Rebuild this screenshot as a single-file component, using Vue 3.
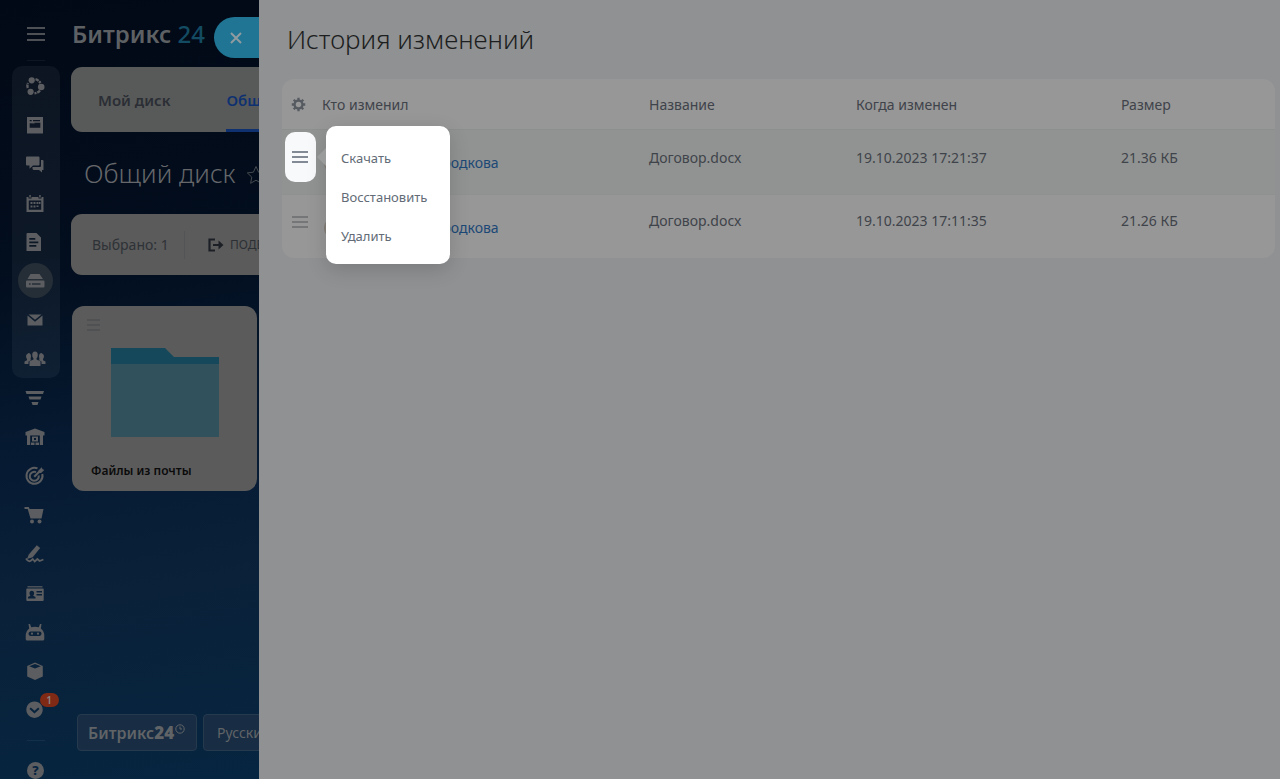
<script setup>
const grouped = ['network', 'feed', 'chat', 'calendar', 'doc', 'disk', 'mail', 'people']
const single = ['funnel', 'store', 'target', 'cart', 'sign', 'card', 'robot', 'box', 'more']
const labels = {
  network: 'Совместная работа', feed: 'Лента', chat: 'Чат', calendar: 'Календарь', doc: 'Документы',
  disk: 'Диск', mail: 'Почта', people: 'Группы', funnel: 'CRM', store: 'Склад', target: 'Маркетинг',
  cart: 'Магазин', sign: 'Подпись', card: 'Компания', robot: 'Автоматизация', box: 'Маркет', more: 'Ещё'
}
const icons = {
  network: '<g fill="none" stroke="currentColor" stroke-width="2.4"><path d="M10.500 3.200Q13.500 4 15.500 7M15 14.500Q13 17 9.500 17.200M2.800 12Q1.800 9.500 3 7"  stroke-dasharray="3.500 .8"/></g><circle cx="6.7" cy="4.3" r="3.100"/><circle cx="16.200" cy="11" r="3.300"/><circle cx="5.600" cy="15.800" r="3.100"/>',
  feed: '<path fill-rule="evenodd" d="M2 2h16v16.500H2zM4.700 5v1.300h2V5zM8 5v1.300h7V5zM4.700 8.200v4.600h10.600V7.700H9.500v.8z"/>',
  chat: '<path d="M2 2.500h11.500q1 0 1 1v7q0 1-1 1H8L4.500 14.800v-3.300H2q-1 0-1-1v-7q0-1 1-1z"/><path d="M16 6h1.500q1 0 1 1v9h-1.500v2.500L14 16H9q-1.500 0-1.500-1.500V13H15q1 0 1-1z"/>',
  calendar: '<path fill-rule="evenodd" d="M1.500 4h2v1.500h3V4h7v1.500h3V4h2v15h-17zM3.800 7.500v9.200h12.400V7.500z"/><path d="M4.300 2h1.500v2.500H4.300zM14.200 2h1.500v2.500h-1.500zM8.500 9h2v2h-2zM11.500 9h2v2h-2zM5.500 12.500h2v2h-2zM8.500 12.500h2v2h-2zM5.500 9h2v2h-2zM14 9h1.500v2H14zM11.500 12.500h2v1.500h-2z"/>',
  doc: '<path fill-rule="evenodd" d="M2.500 1h9L16 5.500V19H1.500V2q0-1 1-1zM4.300 6v1.700h6V6zM4.300 9.500v1.700h9V9.500zM4.300 13v1.700h7V13z"/>',
  disk: '<path fill-rule="evenodd" d="M5.500 3h9l3.500 5H2.500zM2 9.500h16.500q1 0 1 1v5q0 1-1 1H2q-1 0-1-1v-5q0-1 1-1zM4 12.200v1.600h1.600v-1.600zM7 12.200v1.600h8.500v-1.600z"/>',
  mail: '<path d="M3.500 4.500h13L10 9.800z"/><path d="M2.500 5.500 10 11.700l7.500-6.200v10h-15z"/>',
  people: '<path d="M7.200 6Q7.200 2.500 10 2.500T12.800 6Q12.800 8 11.500 9.500v1l4 1.800V17h-11v-4.700l4-1.800v-1Q7.200 8 7.200 6z"/><path d="M3.500 4Q6 4 6 7.500L5.500 10.500l1 .5-3 1.500V15H-.5v-2.500l2.500-1.300v-1Q1 8.500 1 7T3.500 4zM16.500 4Q14 4 14 7.500l.5 3-1 .5 3 1.500V15h4v-2.500L18 11.200v-1Q19 8.500 19 7T16.500 4z"/>',
  funnel: '<path d="M.500 3h18.500l-1 3H1.500zM3.500 8.500h13l-1 3h-11zM6.500 14h7l-1 3h-5z"/>',
  store: '<path fill-rule="evenodd" d="M10 1.500 19.500 5v3.500H18V18h-3.200V8.500H5.200V18H2V8.500H.500V5z"/><path fill-rule="evenodd" d="M7 9.500h6v5H7zM9 11v2h2v-2zM6 15.500h3.500V18H6zM10.500 15.500H14V18h-3.500z"/>',
  target: '<g fill="none" stroke="currentColor" stroke-width="2"><path d="M12.500 2.400A8 8 0 1 0 17.300 8"/><path d="M11 6.200A4.500 4.500 0 1 0 13.700 9.500"/><path d="m9.200 10.800 5.500-5.500" stroke-width="2.2"/></g><path d="m13.500 4.500 3.200-3.200.7 1.800 1.900.8-3.200 3.100h-2.600z"/>',
  cart: '<path d="M-.500 2h4.300l.8 2H18.500l-2 9.500H5.500L2.700 4H-.500z"/><circle cx="7" cy="16.500" r="2"/><circle cx="14.500" cy="16.500" r="2"/>',
  sign: '<path d="m11.800 1.300 3.400 2.700-7.500 9.300-5.700 1.700 1.800-4.500z"/><path d="M1 14.500q2 3.500 4.500 2.500l2.200-2 2 2.500 2.700-2.500 2.200 2 3.800-1.500" fill="none" stroke="currentColor" stroke-width="1.800"/>',
  card: '<path fill-rule="evenodd" d="M2 5.500h16q.700 0 .700.700V17q0 1-1 1H2.300q-1 0-1-1V6.200q0-.700.700-.700zM11.500 8v1.500H17V8zM11.500 11v1.500H17V11zM3 15.500h7.500v-1.500l-2.300-1.200q1.200-1.300.9-3.300Q8.700 7.700 6.800 7.700T4.500 9.500q-.300 2 .900 3.300L3 14z"/><path d="M2.500 3.200h15v1.200h-15z"/>',
  robot: '<path fill-rule="evenodd" d="M3.500 2h1.500l1.200 3.300Q10 4 13.800 5.300L15 2h1.500l-.7 4.500q3.500 2.500 3.500 7.500v3q0 1.500-1.500 1.500H2.200Q.7 18.500.7 17v-3q0-5 3.500-7.500zM5.500 9.500q-2 .2-2 2.200t2 2.300h9q2-.2 2-2.300t-2-2.200z"/><circle cx="7" cy="11.700" r="1.100"/><circle cx="13" cy="11.700" r="1.100"/>',
  box: '<path fill-rule="evenodd" d="M10 1.500 17.800 5v10.500L10 19l-7.800-3.500V5zM10 3 4.200 5.300 10 7.500l5.800-2.200z"/>',
  more: '<path fill-rule="evenodd" d="M9.500 1.500a8.200 8.200 0 1 0 .01 0zM5.800 7.500l3.700 3.300 3.700-3.300 1.300 1.500-5 4.500-5-4.500z"/>'
}
const rows = [
  { who: 'Мария Бородкова', name: 'Договор.docx', when: '19.10.2023 17:21:37', size: '21.36 КБ', active: true },
  { who: 'Мария Бородкова', name: 'Договор.docx', when: '19.10.2023 17:11:35', size: '21.26 КБ', active: false }
]
const actions = ['Скачать', 'Восстановить', 'Удалить']
</script>

<template>
  <div class="page">
    <div class="portal">
      <nav class="rail">
        <button class="burger" aria-label="Меню"><i></i><i></i><i></i></button>
        <hr class="line" />
        <div class="group">
          <a v-for="k in grouped" :key="k" href="#" class="nav" :class="{ current: k === 'disk' }" :aria-label="labels[k]">
            <svg viewBox="0 0 20 20" v-html="icons[k]"></svg>
          </a>
        </div>
        <a v-for="k in single" :key="k" href="#" class="nav" :aria-label="labels[k]">
          <svg viewBox="0 0 20 20" v-html="icons[k]"></svg>
          <span v-if="k === 'more'" class="badge">1</span>
        </a>
        <hr class="line low" />
        <a href="#" class="help" aria-label="Помощь">?</a>
      </nav>
      <main class="work">
        <header class="logo"><b>Битрикс</b> <span>24</span></header>
        <nav class="tabs">
          <a href="#">Мой диск</a>
          <a href="#" class="on">Общий диск</a>
        </nav>
        <h1 class="title">
          <span>Общий диск</span>
          <svg viewBox="0 0 20 20"><path d="m10 1.500 2.600 5.700 6.100.7-4.500 4.200 1.200 6.200-5.400-3.100-5.400 3.100 1.200-6.200L1.300 7.900l6.100-.7z" /></svg>
        </h1>
        <div class="toolbar">
          <span class="picked">Выбрано: 1</span>
          <button class="share">
            <svg viewBox="0 0 16 14"><path d="M7 1.500H1.500v11H7M5 7h7" fill="none" stroke="currentColor" stroke-width="2.200" /><path d="M10.500 2.500 15.500 7l-5 4.500z" /></svg>
            <span>ПОДЕЛИТЬСЯ</span>
          </button>
        </div>
        <article class="tile">
          <button class="grip" aria-label="Действия"><i></i><i></i><i></i></button>
          <svg class="folder" viewBox="0 0 108 89"><path class="back" d="M0 0h54l9 9h45v20H0z" /><path class="front" d="M0 16h108v73H0z" /></svg>
          <span class="caption">Файлы из почты</span>
        </article>
        <footer class="foot">
          <a href="#" class="brand">Битрикс<b>24</b>
            <svg viewBox="0 0 10 10"><circle cx="5" cy="5" r="4.200" /><path d="M5 2.500V5h2" /></svg>
          </a>
          <a href="#" class="lang">Русский</a>
        </footer>
      </main>
      <button class="close" aria-label="Закрыть">
        <svg viewBox="0 0 12 12"><path d="m1 1 10 10M11 1 1 11" /></svg>
      </button>
    </div>

    <section class="drawer">
      <h2>История изменений</h2>
      <table>
        <colgroup><col class="c1" /><col class="c2" /><col class="c3" /><col class="c4" /><col class="c5" /></colgroup>
        <thead>
          <tr>
            <th>
              <button class="gear" aria-label="Настройки">
                <svg viewBox="0 0 16 16"><circle cx="8" cy="8" r="4.200" /><path d="M8 .8v3M8 12.200v3M.8 8h3M12.200 8h3M2.900 2.900l2.200 2.200M10.900 10.900l2.200 2.200M2.900 13.100l2.200-2.200M10.900 5.100l2.200-2.200" /></svg>
              </button>
            </th>
            <th>Кто изменил</th><th>Название</th><th>Когда изменен</th><th>Размер</th>
          </tr>
        </thead>
        <tbody>
          <tr v-for="r in rows" :key="r.when" :class="{ active: r.active }">
            <td class="act">
              <button class="dots" aria-label="Действия"><i></i><i></i><i></i></button>
              <div v-if="r.active" class="menu" role="menu">
                <button v-for="a in actions" :key="a" role="menuitem">{{ a }}</button>
              </div>
            </td>
            <td class="who"><span class="person"><span class="avatar"></span><a href="#">{{ r.who }}</a></span></td>
            <td>{{ r.name }}</td>
            <td>{{ r.when }}</td>
            <td>{{ r.size }}</td>
          </tr>
        </tbody>
      </table>
    </section>
  </div>
</template>

<style>
body { background: #8f9193; }
</style>

<style scoped>
* { box-sizing: border-box; }
.page { display: flex; height: 100vh; overflow: hidden; font-family: "Noto Sans", "Open Sans", sans-serif; font-size: 14px; }
button { border: 0; background: none; padding: 0; font: inherit; color: inherit; }
a { text-decoration: none; color: inherit; }
svg { display: block; fill: currentColor; overflow: visible; }

.portal { position: relative; display: flex; flex: 0 0 259px; overflow: hidden; background: linear-gradient(172deg, #020916 0%, #020d1d 32%, #061b33 58%, #0a2139 75%, #062540 100%); }
.rail { flex: 0 0 71px; display: flex; flex-direction: column; align-items: center; color: #5b5d60; }
.burger { display: flex; flex-direction: column; gap: 4px; margin-top: 27px; width: 18px; flex: none; }
.burger i { height: 2px; background: #4d5054; }
.line { width: 18px; height: 1px; border: 0; margin: 19px 0 5px; background: #0d1622; flex: none; }
.line.low { margin: 11px 0 21px; background: #123149; }
.group { width: 48px; border-radius: 10px; background: #ffffff0c; flex: none; }
.nav { position: relative; display: flex; align-items: center; justify-content: center; height: 39px; width: 48px; padding-right: 1px; flex: none; }
.nav svg { width: 20px; height: 20px; position: relative; }
.current::before { content: ""; position: absolute; width: 35px; height: 35px; border-radius: 50%; background: #252e37; }
.badge { position: absolute; left: 28px; top: 3px; width: 19px; height: 14px; border-radius: 7px; background: #802a15; color: #8d8582; font-size: 10px; line-height: 14px; text-align: center; font-weight: 600; }
.help { width: 17px; height: 17px; border-radius: 50%; background: #5b5d60; color: #082440; font-weight: 800; font-size: 13px; line-height: 17px; text-align: center; flex: none; }

.work { flex: none; width: 1209px; display: flex; flex-direction: column; }
.logo { padding: 17px 0 0 1px; height: 67px; font-size: 24px; line-height: 34px; color: #5e6164; }
.logo b { font-weight: 600; }
.logo span { color: #134b62; font-weight: 500; }
.close { position: absolute; right: 0; top: 17px; width: 45px; height: 41px; border-radius: 21px 0 0 21px; background: #1f7593; color: #8f9ba0; padding-left: 16px; }
.close svg { width: 12px; height: 12px; fill: none; stroke: currentColor; stroke-width: 2; }
.tabs { display: flex; gap: 56px; height: 65px; padding-left: 27px; border-radius: 11px; background: #585a59; font-size: 15px; line-height: 66px; font-weight: 600; color: #2b2e35; }
.on { height: 65px; color: #0f3170; border-bottom: 3px solid #0f3170; }
.title { display: flex; align-items: center; gap: 10px; height: 82px; margin: 0; padding-left: 13px; font-size: 26px; font-weight: 300; color: #65676a; }
.title svg { width: 20px; height: 20px; margin-top: 4px; fill: none; stroke: #45494e; stroke-width: 1; }
.toolbar { display: flex; align-items: center; height: 61px; padding-left: 21px; border-radius: 11px; background: #5b5b5b; color: #2e3237; }
.picked { width: 93px; font-size: 14px; line-height: 28px; border-right: 1px solid #535455; }
.share { display: flex; align-items: center; gap: 6px; margin-left: 23px; font-size: 12px; color: #2c3035; }
.share svg { width: 16px; height: 14px; color: #1c2026; }
.tile { display: flex; flex-direction: column; margin: 31px 0 0 1px; width: 185px; height: 185px; border-radius: 12px; background: #5b5b5b; }
.grip { display: flex; flex-direction: column; gap: 3px; width: 13px; margin: 13px 0 0 15px; }
.grip i { height: 2px; background: #505152; }
.folder { width: 108px; height: 89px; margin: 17px 0 0 39px; }
.back { fill: #14485a; }
.front { fill: #31515c; }
.caption { margin: 24px 0 0 19px; font-size: 12px; line-height: 20px; font-weight: 600; color: #0b0b0c; }
.foot { display: flex; gap: 6px; margin: auto 0 28px 6px; }
.foot a { display: flex; align-items: center; height: 37px; border: 1px solid #263a4e; border-radius: 4px; background: #182c43; color: #606467; }
.foot .brand { width: 120px; padding-left: 10px; font-size: 16px; font-weight: 600; }
.brand b { font-size: 17px; }
.brand svg { width: 10px; height: 10px; margin: -8px 0 0 1px; fill: none; stroke: currentColor; stroke-width: 1; }
.foot .lang { padding: 0 13px; font-size: 14px; }

.drawer { flex: 1; min-width: 0; padding: 20px 5px 0 23px; background: #8f9193; color: #3f434a; }
h2 { margin: 0 0 21px 5px; font-size: 26px; line-height: 38px; font-weight: 300; color: #1d1e20; }
table { width: 100%; table-layout: fixed; border-collapse: separate; border-spacing: 0; border-radius: 12px; background: #979797; }
.c1 { width: 40px; }
.c3 { width: 207px; }
.c4 { width: 265px; }
.c5 { width: 154px; }
th { height: 51px; padding: 0; text-align: left; font-weight: 400; border-bottom: 1px solid #8d8f8f; }
td { height: 63px; padding: 16px 0 0; vertical-align: top; line-height: 20px; }
.active td { height: 65px; padding-top: 18px; background: #919392; border-bottom: 1px solid #8f9090; }
.gear { display: block; margin-left: 9px; color: #565b61; }
.gear svg { width: 15px; height: 15px; fill: none; stroke: currentColor; stroke-width: 2.500; }
tr td.act { position: relative; padding: 2px 0 0 3px; }
.dots { display: flex; flex-direction: column; justify-content: center; gap: 3px; width: 31px; height: 50px; padding: 0 8px 0 7px; border-radius: 10px; }
.dots i { height: 2px; background: #747677; }
.active .dots { background: #f8f9fb; }
.active .dots i { background: #828b95; }
.menu { position: absolute; z-index: 2; left: 44px; top: -4px; width: 124px; padding: 12px 0 9px; display: flex; flex-direction: column; border-radius: 10px; background: #fff; box-shadow: 0 6px 20px #00000026; font-size: 13px; color: #626b76; }
.menu::before { content: ""; position: absolute; left: -9px; top: 22px; border: 9px solid transparent; border-left: 0; border-right-color: #9a9b9b; }
.menu button { height: 39px; padding-left: 15px; text-align: left; }
tr td.who { padding-top: 14px; }
.person { display: flex; align-items: center; gap: 30px; height: 38px; }
.avatar { width: 22px; height: 22px; margin-left: 2px; border-radius: 50%; background: #857f78; }
.person a { color: #1c4876; }
</style>
